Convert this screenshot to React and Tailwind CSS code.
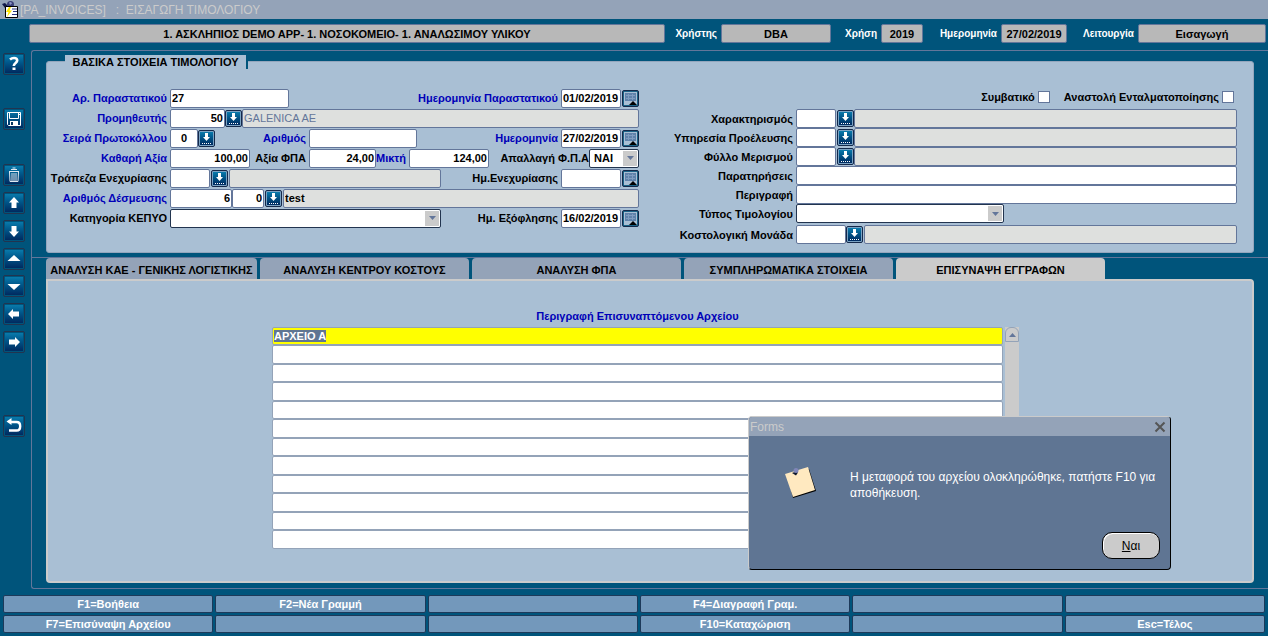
import { useEffect, useRef } from "react";

const tabs = [
  "ΑΝΑΛΥΣΗ ΚΑΕ - ΓΕΝΙΚΗΣ ΛΟΓΙΣΤΙΚΗΣ",
  "ΑΝΑΛΥΣΗ ΚΕΝΤΡΟΥ ΚΟΣΤΟΥΣ",
  "ΑΝΑΛΥΣΗ ΦΠΑ",
  "ΣΥΜΠΛΗΡΩΜΑΤΙΚΑ ΣΤΟΙΧΕΙΑ",
  "ΕΠΙΣΥΝΑΨΗ ΕΓΓΡΑΦΩΝ",
];

const functionKeys = [
  "F1=Βοήθεια",
  "F2=Νέα Γραμμή",
  "",
  "F4=Διαγραφή Γραμ.",
  "",
  "",
  "F7=Επισύναψη Αρχείου",
  "",
  "",
  "F10=Καταχώριση",
  "",
  "Esc=Τέλος",
];

const files = ["ΑΡΧΕΙΟ Α", "", "", "", "", "", "", "", "", "", "", ""];

const tools = [
  {
    name: "Βοήθεια",
    space: "mt-[3px]",
    icon: (
      <>
        <path
          d="M7 6.500C8 5.600 9.500 5 11 5c2 0 3.200.9 3.200 2.500 0 2.400-3.400 2.500-3.400 5.500"
          fill="none"
          stroke="#fff"
          strokeWidth="2.600"
        />
        <path d="M9.500 14.500h3V17h-3z" fill="#fff" />
      </>
    ),
  },
  {
    name: "Αποθήκευση",
    space: "mt-[33px]",
    icon: (
      <>
        <path d="M4.500 4.500h13v13h-12l-1-1z" fill="none" stroke="#fff" />
        <path d="M6.500 4.500v6h9v-6M16 6.500h1" fill="none" stroke="#fff" />
        <path d="M7 13h8v5H7z" fill="#fff" />
        <path d="M8 14h2v3H8z" fill="#06365f" />
      </>
    ),
  },
  {
    name: "Διαγραφή",
    space: "mt-[34px]",
    icon: (
      <>
        <path d="M8 5.500h6M9.500 4h3" stroke="#dfe8f0" />
        <path d="M6 7.500h10M6.500 8l.5 9.500h8l.5-9.500M9 9v8M11 9v8M13 9v8" fill="none" stroke="#dfe8f0" />
      </>
    ),
  },
  { name: "Πάνω", space: "mt-[6px]", icon: <path d="M11 5l5 5.500h-2.500V16h-5v-5.500H6z" fill="#fff" /> },
  { name: "Κάτω", space: "mt-[6px]", icon: <path d="M11 17l5-5.500h-2.500V6h-5v5.500H6z" fill="#fff" /> },
  { name: "Προηγούμενη σελίδα", space: "mt-[6px]", icon: <path d="M11 7l6.500 6h-13z" fill="#fff" /> },
  { name: "Επόμενη σελίδα", space: "mt-[5px]", icon: <path d="M11 15L4.500 9h13z" fill="#fff" /> },
  { name: "Αριστερά", space: "mt-[6px]", icon: <path d="M5 11l5-5v2.500h6v5h-6V16z" fill="#fff" /> },
  { name: "Δεξιά", space: "mt-[6px]", icon: <path d="M17 11l-5-5v2.500H6v5h6V16z" fill="#fff" /> },
  {
    name: "Επιστροφή",
    space: "mt-[62px]",
    icon: (
      <>
        <path d="M7 7h6.500c2.200 0 3.700 1.600 3.700 4.200s-1.500 4.300-3.700 4.300H6" fill="none" stroke="#fff" strokeWidth="2.400" />
        <path d="M3.500 6.500l5-3.500v7z" fill="#fff" />
      </>
    ),
  },
];

function ToolButton({ name, space, icon }) {
  return (
    <button
      type="button"
      title={name}
      className={`block size-[22px] shrink-0 rounded-[2px] border border-[#22344f] bg-[#00547b] p-px ${space}`}
    >
      <svg viewBox="2 2 18 18" className="block size-full bg-linear-to-b from-[#0a7aab] to-[#002a60]">
        {icon}
      </svg>
    </button>
  );
}

// List of values button
function LovButton({ label }) {
  return (
    <button
      type="button"
      aria-label={label}
      className="size-[17px] shrink-0 rounded-[2px] border border-[#15294a] bg-[#7ba3c4] p-px"
    >
      <svg viewBox="0 0 13 13" className="block size-full bg-linear-to-b from-[#0a7aab] to-[#002a60]">
        <path d="M5 1h3v4h2L6.500 9 3 5h2z" fill="#fff" />
        <path d="M2 11.500h9" stroke="#fff" strokeDasharray="1 1" />
      </svg>
    </button>
  );
}

function CalendarButton({ label }) {
  return (
    <button
      type="button"
      aria-label={label}
      className="size-[17px] shrink-0 rounded-[2px] border border-[#15294a] bg-[#1a6488] p-px"
    >
      <svg viewBox="0 0 13 13" className="block size-full bg-[#a9bfd4]">
        <path d="M1 1h11v8H1z" fill="#5f82ab" />
        <path d="M2 3.500h9M2 6.500h9M4.500 2v6M8.500 2v6" stroke="#7f9dc0" />
        <path d="M5 13l4-4 4 4z" fill="#000" />
      </svg>
    </button>
  );
}

function Label({ htmlFor, blue, className = "", children }) {
  return (
    <label
      htmlFor={htmlFor}
      className={`shrink-0 whitespace-nowrap text-right ${blue ? "text-[#0000b8]" : "text-black"} ${className}`}
    >
      {children}
    </label>
  );
}

function Field({ className = "", readOnly, ...props }) {
  return (
    <input
      type="text"
      readOnly={readOnly}
      className={`h-[19px] min-w-0 rounded-[2px] border border-[#63769a] px-px outline-none ${
        readOnly ? "bg-[#dee0de]" : "bg-white"
      } ${className}`}
      {...props}
    />
  );
}

function Dropdown({ id, value, className = "" }) {
  return (
    <div className={`relative h-[19px] shrink-0 ${className}`}>
      <select
        id={id}
        defaultValue={value}
        className="block size-full appearance-none rounded-[2px] border border-[#22344f] bg-white px-1 outline-none"
      >
        <option value={value}>{value}</option>
      </select>
      <span className="pointer-events-none absolute inset-y-0.5 right-0.5 flex w-[14px] items-center justify-center bg-[#cbcbcb]">
        <svg viewBox="0 0 7 4" className="h-1 w-[7px]">
          <path d="M0 0h7L3.500 4z" fill="#63769a" />
        </svg>
      </span>
    </div>
  );
}

function DateField({ id, label, value, blue }) {
  return (
    <>
      <Label htmlFor={id} blue={blue} className="ml-auto pr-[3px]">
        {label}
      </Label>
      <Field id={id} defaultValue={value} className="w-[60px] shrink-0" />
      <div className="ml-px flex">
        <CalendarButton label={label} />
      </div>
    </>
  );
}

function StatusField({ id, label, value, labelWidth, width }) {
  return (
    <div className="flex items-center">
      <label
        htmlFor={id}
        className={`pr-1 text-right text-[10px] whitespace-nowrap text-white ${labelWidth}`}
      >
        {label}
      </label>
      <input
        id={id}
        readOnly
        value={value}
        className={`h-[19px] rounded-[2px] border border-[#63769a] bg-[#b8b8b8] text-center outline-none ${width}`}
      />
    </div>
  );
}

function InvoiceHeader() {
  const row = "flex h-5 items-center";
  const label = "w-[123px] pr-[3px]";

  return (
    <section className="rounded-[3px] border border-[#94a6bd] bg-[#a9bfd4] pb-2">
      <div className="flex items-start">
        <h2 className="-mt-[7px] ml-[18px] flex h-[14px] w-[181px] items-center justify-center bg-[#a9bfd4]">
          ΒΑΣΙΚΑ ΣΤΟΙΧΕΙΑ ΤΙΜΟΛΟΓΙΟΥ
        </h2>
        <span className="-mt-px h-2 w-0.5 bg-[#00547b]" />
      </div>

      <div className="flex pt-[19px] pr-4">
        <div className="w-[592px] shrink-0">
          <div className={row}>
            <Label htmlFor="docNo" blue className={label}>Αρ. Παραστατικού</Label>
            <Field id="docNo" defaultValue="27" className="w-[119px]" />
            <DateField id="docDate" label="Ημερομηνία Παραστατικού" value="01/02/2019" blue />
          </div>
          <div className={row}>
            <Label htmlFor="supplier" blue className={label}>Προμηθευτής</Label>
            <Field id="supplier" defaultValue="50" className="w-[55px] text-right" />
            <LovButton label="Προμηθευτής" />
            <Field
              aria-label="Επωνυμία προμηθευτή"
              readOnly
              value="GALENICA AE"
              className="flex-1 font-normal text-[#63769a]"
            />
          </div>
          <div className={row}>
            <Label htmlFor="series" blue className={label}>Σειρά Πρωτοκόλλου</Label>
            <Field id="series" defaultValue="0" className="w-7 text-center" />
            <LovButton label="Σειρά Πρωτοκόλλου" />
            <Label htmlFor="protocol" blue className="w-[94px] pr-[3px]">Αριθμός</Label>
            <Field id="protocol" defaultValue="" className="w-[108px]" />
            <DateField id="protocolDate" label="Ημερομηνία" value="27/02/2019" blue />
          </div>
          <div className={row}>
            <Label htmlFor="net" blue className={label}>Καθαρή Αξία</Label>
            <Field id="net" defaultValue="100,00" className="w-20 text-right" />
            <Label htmlFor="vat" className="w-[59px] pr-[3px]">Αξία ΦΠΑ</Label>
            <Field id="vat" defaultValue="24,00" className="w-[67px] text-right" />
            <Label htmlFor="gross" blue className="w-[33px] pr-[3px]">Μικτή</Label>
            <Field id="gross" defaultValue="124,00" className="w-20 text-right" />
            <Label htmlFor="exempt" className="ml-auto">Απαλλαγή Φ.Π.Α</Label>
            <Dropdown id="exempt" value="ΝΑΙ" className="w-[50px]" />
          </div>
          <div className={row}>
            <Label htmlFor="bank" className={label}>Τράπεζα Ενεχυρίασης</Label>
            <Field id="bank" defaultValue="" className="mr-px w-10" />
            <LovButton label="Τράπεζα Ενεχυρίασης" />
            <Field aria-label="Όνομα τράπεζας" readOnly value="" className="ml-px w-[212px]" />
            <DateField id="pledgeDate" label="Ημ.Ενεχυρίασης" value="" />
          </div>
          <div className={row}>
            <Label htmlFor="commitment" blue className={label}>Αριθμός Δέσμευσης</Label>
            <Field id="commitment" defaultValue="6" className="w-[62px] text-right" />
            <Field aria-label="Υποαριθμός δέσμευσης" defaultValue="0" className="mr-px w-8 text-right" />
            <LovButton label="Αριθμός Δέσμευσης" />
            <Field aria-label="Περιγραφή δέσμευσης" readOnly value="test" className="ml-px flex-1" />
          </div>
          <div className={row}>
            <Label htmlFor="category" className={label}>Κατηγορία ΚΕΠΥΟ</Label>
            <Dropdown id="category" value="" className="w-[271px]" />
            <DateField id="payDate" label="Ημ. Εξόφλησης" value="16/02/2019" />
          </div>
        </div>

        <InvoiceDetails />
      </div>
    </section>
  );
}

function InvoiceDetails() {
  const row = "flex h-[19px] items-center";
  const label = "w-[157px] pr-[3px]";
  const checkbox = "ml-[3px] size-3 appearance-none border border-[#63769a] bg-white";

  return (
    <div className="min-w-0 flex-1">
      <div className="flex h-[21px] items-center justify-end pr-[3px] pb-1">
        <Label htmlFor="conventional">Συμβατικό</Label>
        <input id="conventional" type="checkbox" className={checkbox} />
        <Label htmlFor="suspended" className="ml-[14px]">Αναστολή Ενταλματοποίησης</Label>
        <input id="suspended" type="checkbox" className={checkbox} />
      </div>
      <div className={row}>
        <Label htmlFor="kind" className={label}>Χαρακτηρισμός</Label>
        <Field id="kind" defaultValue="" className="mr-px w-10" />
        <LovButton label="Χαρακτηρισμός" />
        <Field aria-label="Περιγραφή χαρακτηρισμού" readOnly value="" className="flex-1" />
      </div>
      <div className={row}>
        <Label htmlFor="origin" className={label}>Υπηρεσία Προέλευσης</Label>
        <Field id="origin" defaultValue="" className="mr-px w-10" />
        <LovButton label="Υπηρεσία Προέλευσης" />
        <Field aria-label="Περιγραφή υπηρεσίας" readOnly value="" className="flex-1" />
      </div>
      <div className={row}>
        <Label htmlFor="sheet" className={label}>Φύλλο Μερισμού</Label>
        <Field id="sheet" defaultValue="" className="mr-px w-10" />
        <LovButton label="Φύλλο Μερισμού" />
        <Field aria-label="Περιγραφή φύλλου" readOnly value="" className="flex-1" />
      </div>
      <div className={row}>
        <Label htmlFor="remarks" className={label}>Παρατηρήσεις</Label>
        <Field id="remarks" defaultValue="" className="flex-1" />
      </div>
      <div className={row}>
        <Label htmlFor="description" className={label}>Περιγραφή</Label>
        <Field id="description" defaultValue="" className="flex-1" />
      </div>
      <div className={row}>
        <Label htmlFor="type" className={label}>Τύπος Τιμολογίου</Label>
        <Dropdown id="type" value="" className="w-[208px]" />
      </div>
      <div className={`mt-0.5 ${row}`}>
        <Label htmlFor="costUnit" className={label}>Κοστολογική Μονάδα</Label>
        <Field id="costUnit" defaultValue="" className="w-[50px]" />
        <LovButton label="Κοστολογική Μονάδα" />
        <Field aria-label="Περιγραφή μονάδας" readOnly value="" className="ml-px flex-1" />
      </div>
    </div>
  );
}

function Attachments() {
  const current = useRef(null);

  // The current record is entered with its text selected
  useEffect(() => {
    current.current.focus();
    current.current.select();
  }, []);

  return (
    <div className="rounded-tr-[4px] rounded-b-[4px] border-2 border-[#cbcbcb] bg-[#a9bfd4] pt-7 pr-[233px] pb-8 pl-[224px]">
      <h3 id="files" className="pr-4 pb-1 text-center leading-[14px] text-[#0000b8]">
        Περιγραφή Επισυναπτόμενου Αρχείου
      </h3>
      <div className="flex gap-0.5">
        <div className="flex min-w-0 flex-1 flex-col">
          {files.map((file, i) => (
            <input
              key={i}
              ref={i === 0 ? current : null}
              aria-labelledby="files"
              defaultValue={file}
              className={`h-[18px] w-full rounded-[2px] border border-[#94a3b8] px-px outline-none even:h-[19px] selection:bg-[#5f7593] selection:text-white ${
                i === 0 ? "bg-[#ffff00]" : "bg-white"
              }`}
            />
          ))}
        </div>
        <div className="w-[14px] bg-[#cbcbcb]">
          <button
            type="button"
            aria-label="Κύλιση πάνω"
            className="flex h-[15px] w-full items-center justify-center rounded-t-[6px] border border-[#94a3b8] bg-[#cbcbcb]"
          >
            <svg viewBox="0 0 7 4" className="h-1 w-[7px]">
              <path d="M3.500 0L7 4H0z" fill="#63769a" />
            </svg>
          </button>
        </div>
      </div>
    </div>
  );
}

function MessageDialog() {
  return (
    <div
      role="dialog"
      aria-label="Forms"
      className="absolute right-[97px] bottom-[66px] w-[423px] rounded-[4px] border border-t-[#cbcbcb] border-r-black border-b-black border-l-[#cbcbcb] bg-[#5f7593] text-[12px] font-normal text-white"
    >
      <div className="flex h-[19px] items-center justify-between rounded-t-[3px] bg-[#94a3b8] px-px pr-1 text-[#cbcbcb]">
        <span>Forms</span>
        <button type="button" aria-label="Κλείσιμο">
          <svg viewBox="0 0 12 12" className="size-3">
            <path d="M1.500 1.500l9 9M10.500 1.500l-9 9" stroke="#555" strokeWidth="2" />
          </svg>
        </button>
      </div>
      <div className="flex pt-[31px] pl-9">
        <svg viewBox="0 0 32 32" className="size-8 shrink-0">
          <path d="M2 8l6 23 23-7-7-22z" fill="#000" />
          <path d="M0 7l23-7 7 23-22 7z" fill="#ffe9c0" />
          <path d="M7 6l4-1.500 2 1-2 3z" fill="#10182c" />
          <circle cx="11" cy="3.500" r="2.500" fill="#7f86b8" />
        </svg>
        <p className="ml-[33px] pt-0.5 leading-4">
          Η μεταφορά του αρχείου ολοκληρώθηκε, πατήστε F10 για αποθήκευση.
        </p>
      </div>
      <div className="flex justify-end pt-[31px] pr-2.5 pb-2.5">
        <button
          type="button"
          className="h-[27px] w-[58px] rounded-[10px] border border-black bg-[#cbcbcb] text-black shadow-[inset_1px_1px_0_#fff]"
        >
          <u>Ν</u>αι
        </button>
      </div>
    </div>
  );
}

export default function App() {
  return (
    <div className="relative flex min-h-screen flex-col bg-[#00547b] font-['Liberation_Sans',Arial,sans-serif] text-[11px] leading-[14px] font-bold text-black">
      <header className="flex h-[19px] items-center bg-[#94a3b8] text-[12px] font-normal text-[#cbcbcb]">
        <svg viewBox="0 0 17 17" className="ml-0.5 size-[17px] shrink-0">
          <path d="M0 3l3-1 4 4-2 5-2 1V7z" fill="#10184a" />
          <circle cx="8.500" cy="3.500" r="3.500" fill="#3a3f78" />
          <path d="M7 1.500l2-.5 1 1.500-2 1.500z" fill="#8d97c8" />
          <path d="M3.500 5.500h12v11h-12z" fill="#fff" stroke="#000" />
          <path d="M7 6L4 11h2.500L5 16l5-6.500H7.500L9 6z" fill="#ffe600" />
          <path d="M10 8h5M11 10.500h4M10 13.500h5" stroke="#26357f" />
        </svg>
        <h1 className="ml-px whitespace-pre">[PA_INVOICES]   :  ΕΙΣΑΓΩΓΗ ΤΙΜΟΛΟΓΙΟΥ</h1>
      </header>

      <div className="flex items-center pt-[5px] pr-0.5 pb-[7px] pl-[29px]">
        <input
          aria-label="Εφαρμογή"
          readOnly
          value="1. ΑΣΚΛΗΠΙΟΣ DEMO APP- 1. ΝΟΣΟΚΟΜΕΙΟ- 1. ΑΝΑΛΩΣΙΜΟΥ ΥΛΙΚΟΥ"
          className="h-[19px] min-w-0 flex-1 rounded-[2px] border border-[#63769a] bg-[#b8b8b8] text-center outline-none"
        />
        <StatusField id="user" label="Χρήστης" value="DBA" labelWidth="w-14" width="w-[110px]" />
        <StatusField id="year" label="Χρήση" value="2019" labelWidth="w-[50px]" width="w-[42px]" />
        <StatusField id="today" label="Ημερομηνία" value="27/02/2019" labelWidth="w-[78px]" width="w-[66px]" />
        <StatusField id="mode" label="Λειτουργία" value="Εισαγωγή" labelWidth="w-[71px]" width="w-[128px]" />
      </div>

      <div className="flex flex-1">
        <nav className="flex w-[31px] shrink-0 flex-col pl-[3px]">
          {tools.map((tool) => (
            <ToolButton key={tool.name} {...tool} />
          ))}
        </nav>

        <main className="min-w-0 flex-1">
          <div className="rounded-tl-[3px] border-t border-l border-[#63769a] pt-[10px] pr-[14px] pb-1 pl-[14px]">
            <InvoiceHeader />
          </div>
          <div className="rounded-bl-[3px] border-y border-l border-[#63769a] pr-[14px] pb-[5px] pl-[14px]">
            <div role="tablist" className="flex gap-[3px]">
              {tabs.map((tab, i) => (
                <button
                  key={tab}
                  type="button"
                  role="tab"
                  aria-selected={i === 4}
                  className={`h-[21px] w-[209px] rounded-t-[4px] pt-0.5 whitespace-nowrap first:w-[211px] ${
                    i === 4 ? "bg-[#cbcbcb]" : "bg-[#94a3b8]"
                  }`}
                >
                  {tab}
                </button>
              ))}
            </div>
            <Attachments />
          </div>
        </main>
      </div>

      <footer className="grid grid-cols-[repeat(5,minmax(0,21fr))_minmax(0,20fr)] gap-0.5 px-[3px] pt-[5px] pb-[3px]">
        {functionKeys.map((key, i) => (
          <button
            key={i}
            type="button"
            aria-label={key || "Χωρίς λειτουργία"}
            className="h-[18px] rounded-[2px] border border-[#1d3a5a] bg-[#7398bb] text-white"
          >
            {key}
          </button>
        ))}
      </footer>

      <MessageDialog />
    </div>
  );
}
